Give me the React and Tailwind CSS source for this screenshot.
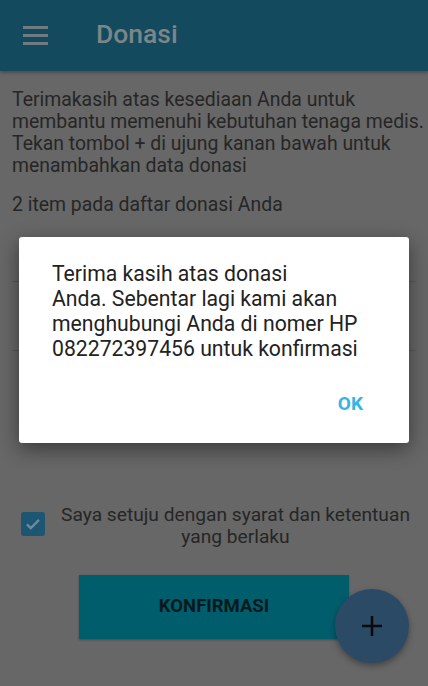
import React from "react";

export default function App() {
  return (
    <div className="relative w-[428px] h-[686px] overflow-hidden bg-[#676767]" style={{ fontFamily: "Roboto, 'Noto Sans', sans-serif" }}>
      {/* App bar */}
      <div className="h-[71px] bg-[#134a5e] flex items-center shadow-[0_2px_3px_rgba(0,0,0,0.25)]">
        <div className="ml-[23px] w-[25px] flex flex-col gap-[5px]">
          <div className="h-[3px] bg-[#6f7b80]" />
          <div className="h-[3px] bg-[#6f7b80]" />
          <div className="h-[3px] bg-[#6f7b80]" />
        </div>
        <div className="ml-[48px] mb-[4px] text-[26.5px] font-medium text-[#7d8588]">Donasi</div>
      </div>

      {/* Content */}
      <div className="px-[12px] pt-[18px] text-[#262626]">
        <p className="text-[19.4px] leading-[22px] whitespace-nowrap">
          Terimakasih atas kesediaan Anda untuk<br />
          membantu memenuhi kebutuhan tenaga medis.<br />
          Tekan tombol + di ujung kanan bawah untuk<br />
          menambahkan data donasi
        </p>
        <p className="mt-[17px] text-[19.4px] leading-[22px]">2 item pada daftar donasi Anda</p>

        <div className="mt-[8px]">
          <div className="h-[58px] flex justify-between items-start pt-[7px] pl-[22px] pr-[20px] text-[21px] font-medium border-b border-[#5a5a5a]">
            <span>Hazmat Steril</span>
            <span>50</span>
          </div>
          <div className="h-[69px] flex justify-between items-start pt-[10px] pl-[22px] pr-[20px] text-[21px] font-medium border-b border-[#5a5a5a]">
            <span>Masker Medis</span>
            <span>100</span>
          </div>
        </div>

        <div className="mt-[153px] flex items-start">
          <div className="ml-[9px] mt-[8px] w-[24px] h-[24px] rounded-[3px] bg-[#1d5670] flex items-center justify-center shrink-0">
            <svg width="18" height="18" viewBox="0 0 24 24" fill="none" stroke="#6d8c9a" strokeWidth="3">
              <path d="M4 12.5l5 5L20 6.5" />
            </svg>
          </div>
          <p className="flex-1 ml-[10px] text-center text-[19.2px] leading-[22px] whitespace-nowrap">
            Saya setuju dengan syarat dan ketentuan<br />
            yang berlaku
          </p>
        </div>

        <div className="mt-[27px] flex">
          <div className="ml-[67px] w-[270px] h-[64px] bg-[#005d6c] flex items-center justify-center text-[18.5px] font-bold text-[#08191d] shadow-[0_1px_2px_rgba(0,0,0,0.3)]">
            KONFIRMASI
          </div>
        </div>
      </div>

      {/* FAB */}
      <div className="absolute left-[335px] top-[589px] w-[74px] h-[74px] rounded-full bg-[#2b4a66] flex items-center justify-center shadow-[0_3px_6px_rgba(0,0,0,0.35)]">
        <svg width="22" height="22" viewBox="0 0 22 22" stroke="#0b0b0b" strokeWidth="2.6">
          <path d="M11 1v20M1 11h20" />
        </svg>
      </div>

      {/* Dialog */}
      <div className="absolute left-[19px] top-[237px] w-[390px] h-[206px] bg-white rounded-[3px] shadow-[0_6px_20px_rgba(0,0,0,0.45)] flex flex-col">
        <p className="mt-[24px] ml-[33px] text-[21.2px] leading-[25px] text-[#222222] whitespace-nowrap">
          Terima kasih atas donasi<br />
          Anda. Sebentar lagi kami akan<br />
          menghubungi Anda di nomer HP<br />
          082272397456 untuk konfirmasi
        </p>
        <div className="mt-auto mb-[25px] mr-[46px] self-end text-[19px] font-bold text-[#33b5e5]">OK</div>
      </div>
    </div>
  );
}
